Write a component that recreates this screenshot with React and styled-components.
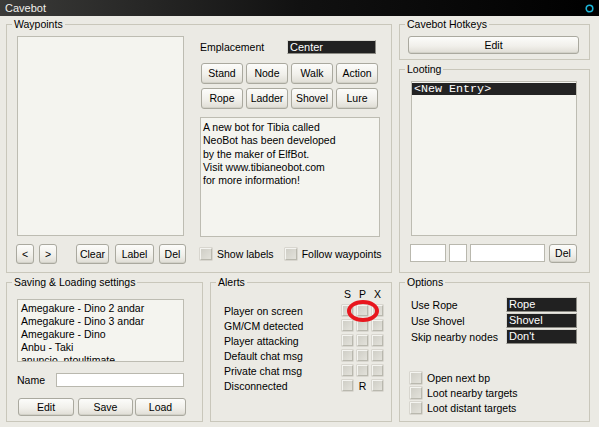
import React from 'react';
import styled, { createGlobalStyle } from 'styled-components';

const GlobalStyle = createGlobalStyle`
  html, body {
    margin: 0;
    padding: 0;
    background: #ebeae4;
  }
  body {
    font-family: "Liberation Sans", Arial, sans-serif;
    font-size: 10.5px;
    color: #000;
  }
  * {
    box-sizing: border-box;
  }
`;

const Window = styled.div`
  width: 599px;
  height: 427px;
  overflow: hidden;
  background: #ebeae4;
  display: flex;
  flex-direction: column;
`;

const TitleBar = styled.div`
  height: 16px;
  flex: none;
  display: flex;
  align-items: center;
  justify-content: space-between;
  padding: 0 5px;
  background: linear-gradient(to right, #3b3b39, #111 50%, #000);
  color: #f0f0ec;
  font-size: 11px;
`;

const Layout = styled.div`
  display: grid;
  grid-template-columns: 386px 191px;
  grid-template-rows: 255px 146px;
  column-gap: 7px;
  row-gap: 3px;
  padding: 2px 0 0 6px;
`;

const Column = styled.div`
  display: flex;
  flex-direction: column;
  gap: ${p => p.$gap || 0}px;
`;

const Row = styled.div`
  display: flex;
  gap: ${p => p.$gap || 0}px;
`;

const Group = styled.fieldset`
  margin: 0;
  padding: 0;
  min-width: 0;
  width: ${p => (p.$w ? `${p.$w}px` : 'auto')};
  height: ${p => p.$h}px;
  border: 1px solid #c9c7bb;
  border-radius: 0;
`;

const Legend = styled.legend`
  margin-left: 5px;
  padding: 0 2px;
  height: 12px;
  line-height: 12px;
  font-size: 10.5px;
`;

const Button = styled.button`
  flex: none;
  width: ${p => (p.$w ? `${p.$w}px` : '100%')};
  height: ${p => p.$h || 20}px;
  margin: 0 0 0 ${p => p.$ml || 0}px;
  padding: 0;
  font: inherit;
  color: #000;
  border: 1px solid #aaa99f;
  border-radius: 3px;
  background: linear-gradient(#fcfcfa, #f1f0eb 55%, #dfddd5);
  box-shadow: inset 0 -1px 0 #d2d1c8;
  line-height: 1;
`;

const ListBox = styled.div`
  width: ${p => p.$w}px;
  height: ${p => p.$h}px;
  margin: ${p => p.$mt || 0}px 0 0 ${p => p.$ml || 0}px;
  background: #f4f4ef;
  border: 1px solid #bdbcb2;
  overflow: hidden;
  padding: ${p => p.$pad || '0'};
`;

const ListItem = styled.div`
  height: 13px;
  line-height: 13px;
  white-space: nowrap;
`;

const SelectedEntry = styled.div`
  height: 12px;
  line-height: 12px;
  background: #232323;
  color: #fff;
  font-family: "Liberation Mono", "Courier New", monospace;
  font-size: 11.7px;
  padding-left: 2px;
`;

const TextField = styled.div`
  flex: none;
  width: ${p => p.$w}px;
  height: ${p => p.$h || 18}px;
  background: #fff;
  border: 1px solid #b9b8ae;
`;

const DarkField = styled.div`
  flex: none;
  width: ${p => p.$w}px;
  height: ${p => p.$h}px;
  background: #212121;
  border: 1px solid #d8d7d0;
  border-right-color: #8c8b84;
  border-bottom-color: #8c8b84;
  color: #fff;
  padding-left: 2px;
  line-height: ${p => p.$h - 2}px;
  font-size: 11px;
`;

const Check = styled.span`
  position: relative;
  flex: none;
  display: inline-block;
  width: ${p => p.$size || 12}px;
  height: ${p => p.$size || 12}px;
  border: 1px solid #b9b8ae;
  border-top-color: #f4f4f0;
  border-left-color: #f4f4f0;
  background: linear-gradient(135deg, #cfcec6, #e3e2db);
  box-shadow: 0 0 0 0.5px #c4c3ba;
`;

const CheckLabel = styled.label`
  display: flex;
  align-items: center;
  gap: 5px;
  height: 12px;
  margin-left: ${p => p.$ml || 0}px;
  white-space: nowrap;
`;

/* Waypoints */

const WaypointsBody = styled.div`
  display: grid;
  grid-template-columns: 170px 180px;
  column-gap: 14px;
  padding-left: 9px;
`;

const NavRow = styled.div`
  display: flex;
  margin-top: 8px;
  height: 20px;
`;

const FieldRow = styled.div`
  display: flex;
  align-items: center;
  height: ${p => p.$h}px;
  margin-top: ${p => p.$mt || 0}px;
`;

const FieldLabel = styled.span`
  flex: none;
  width: ${p => p.$w}px;
  white-space: nowrap;
`;

const ActionGrid = styled.div`
  display: grid;
  grid-template-columns: repeat(4, 42px);
  grid-auto-rows: 21px;
  column-gap: 3px;
  row-gap: 4px;
  margin: 10px 0 0 1px;
`;

const InfoText = styled.div`
  width: 180px;
  height: 120px;
  margin-top: 8px;
  padding: 3px 2px;
  background: #f4f4ef;
  border: 1px solid #bdbcb2;
  line-height: 13.3px;
  white-space: pre-line;
`;

const CheckRow = styled.div`
  display: flex;
  margin-top: 11px;
`;

/* Right column */

const HotkeysBody = styled.div`
  padding: 6px 0 0 8px;
`;

const LootingBody = styled.div`
  padding: 6px 0 0 10px;
`;

const LootInputs = styled.div`
  display: flex;
  gap: 3px;
  margin-top: 8px;
`;

/* Saving */

const SavingBody = styled.div`
  padding: 0 0 0 10px;
`;

const SaveButtons = styled.div`
  display: flex;
  margin-top: 11px;
`;

/* Alerts */

const AlertsGrid = styled.div`
  display: grid;
  grid-template-columns: 114px repeat(3, 11px);
  grid-template-rows: 13px repeat(6, 11px);
  column-gap: 4px;
  row-gap: 4px;
  padding-left: 13px;
  line-height: 11px;
`;

const ColHead = styled.span`
  text-align: center;
  align-self: start;
  line-height: 11px;
  padding-top: 1px;
`;

const AlertLabel = styled.span`
  white-space: nowrap;
  line-height: 11px;
  margin-top: 1px;
`;

const Marker = styled.span`
  position: absolute;
  z-index: 5;
  left: -11px;
  top: -6px;
  width: 32px;
  height: 22px;
  border: 4px solid #e8161e;
  border-radius: 50%;
`;

const LetterCell = styled.span`
  text-align: center;
  line-height: 11px;
  margin-top: 1px;
`;

/* Options */

const OptionsBody = styled.div`
  padding: 9px 0 0 11px;
`;

const OptionChecks = styled.div`
  display: flex;
  flex-direction: column;
  gap: 3px;
  margin: 28px 0 0 -1px;
`;

const alerts = [
  ['Player on screen', ['c', 'c', 'c']],
  ['GM/CM detected', ['c', 'c', 'c']],
  ['Player attacking', ['c', 'c', 'c']],
  ['Default chat msg', ['c', 'c', 'c']],
  ['Private chat msg', ['c', 'c', 'c']],
  ['Disconnected', ['c', 'R', 'c']],
];

const scripts = [
  'Amegakure - Dino 2 andar',
  'Amegakure - Dino 3 andar',
  'Amegakure - Dino',
  'Anbu - Taki',
  'anuncio_ntoultimate',
];

const options = [
  ['Use Rope', 'Rope'],
  ['Use Shovel', 'Shovel'],
  ['Skip nearby nodes', "Don't"],
];

const info = `A new bot for Tibia called
NeoBot has been developed
by the maker of ElfBot.
Visit www.tibianeobot.com
for more information!`;

const Ring = () => (
  <svg width="9" height="9" viewBox="0 0 9 9">
    <circle cx="4.5" cy="4.5" r="3.3" fill="none" stroke="#1cb4d6" strokeWidth="1.6" />
  </svg>
);

export default function App() {
  return (
    <Window>
      <GlobalStyle />
      <TitleBar>
        <span>Cavebot</span>
        <Ring />
      </TitleBar>
      <Layout>
        <Group $h={255}>
          <Legend>Waypoints</Legend>
          <WaypointsBody>
            <Column>
              <ListBox $w={167} $h={200} $mt={6} $ml={1} />
              <NavRow>
                <Button $w={18}>&lt;</Button>
                <Button $w={18} $ml={5}>&gt;</Button>
                <Button $w={33} $ml={19}>Clear</Button>
                <Button $w={39} $ml={6}>Label</Button>
                <Button $w={27} $ml={5}>Del</Button>
              </NavRow>
            </Column>
            <Column>
              <FieldRow $h={13} $mt={10}>
                <FieldLabel $w={87}>Emplacement</FieldLabel>
                <DarkField $w={89} $h={14}>Center</DarkField>
              </FieldRow>
              <ActionGrid>
                {['Stand', 'Node', 'Walk', 'Action', 'Rope', 'Ladder', 'Shovel', 'Lure'].map(b => (
                  <Button key={b} $h={21}>{b}</Button>
                ))}
              </ActionGrid>
              <InfoText>{info}</InfoText>
              <CheckRow>
                <CheckLabel><Check />Show labels</CheckLabel>
                <CheckLabel $ml={11}><Check />Follow waypoints</CheckLabel>
              </CheckRow>
            </Column>
          </WaypointsBody>
        </Group>

        <Column $gap={3}>
          <Group $h={42}>
            <Legend>Cavebot Hotkeys</Legend>
            <HotkeysBody>
              <Button $w={171} $h={18}>Edit</Button>
            </HotkeysBody>
          </Group>
          <Group $h={210}>
            <Legend>Looting</Legend>
            <LootingBody>
              <ListBox $w={166} $h={155} $ml={1} $pad="1px 0 0 0">
                <SelectedEntry>&lt;New Entry&gt;</SelectedEntry>
              </ListBox>
              <LootInputs>
                <TextField $w={36} />
                <TextField $w={18} />
                <TextField $w={75} />
                <Button $w={28} $h={19} $ml={1}>Del</Button>
              </LootInputs>
            </LootingBody>
          </Group>
        </Column>

        <Row $gap={7}>
          <Group $w={197} $h={146}>
            <Legend>Saving &amp; Loading settings</Legend>
            <SavingBody>
              <ListBox $w={167} $h={63} $mt={11} $pad="2px 3px">
                {scripts.map(s => <ListItem key={s}>{s}</ListItem>)}
              </ListBox>
              <FieldRow $h={14} $mt={11}>
                <FieldLabel $w={39}>Name</FieldLabel>
                <TextField $w={128} $h={14} />
              </FieldRow>
              <SaveButtons>
                <Button $w={56} $h={18} $ml={1}>Edit</Button>
                <Button $w={55} $h={18} $ml={4}>Save</Button>
                <Button $w={51} $h={18} $ml={2}>Load</Button>
              </SaveButtons>
            </SavingBody>
          </Group>
          <Group $w={182} $h={146}>
            <Legend>Alerts</Legend>
            <AlertsGrid>
              <span />
              <ColHead>S</ColHead>
              <ColHead>P</ColHead>
              <ColHead>X</ColHead>
              {alerts.map(([label, cells], r) => (
                <React.Fragment key={label}>
                  <AlertLabel>{label}</AlertLabel>
                  {cells.map((c, i) =>
                    c === 'c' ? (
                      <Check key={i} $size={11}>
                        {r === 0 && i === 1 && <Marker />}
                      </Check>
                    ) : (
                      <LetterCell key={i}>{c}</LetterCell>
                    )
                  )}
                </React.Fragment>
              ))}
            </AlertsGrid>
          </Group>
        </Row>

        <Group $h={146}>
          <Legend>Options</Legend>
          <OptionsBody>
            <Column $gap={1}>
              {options.map(([label, value]) => (
                <FieldRow key={label} $h={15}>
                  <FieldLabel $w={95}>{label}</FieldLabel>
                  <DarkField $w={71} $h={15}>{value}</DarkField>
                </FieldRow>
              ))}
            </Column>
            <OptionChecks>
              <CheckLabel><Check />Open next bp</CheckLabel>
              <CheckLabel><Check />Loot nearby targets</CheckLabel>
              <CheckLabel><Check />Loot distant targets</CheckLabel>
            </OptionChecks>
          </OptionsBody>
        </Group>
      </Layout>
    </Window>
  );
}
